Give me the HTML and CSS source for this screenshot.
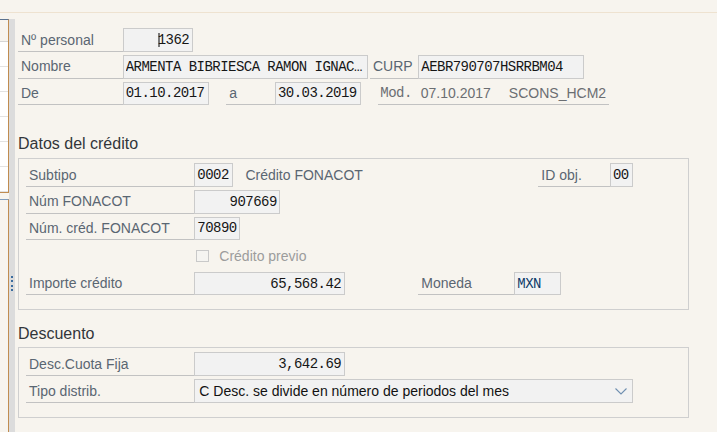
FILE: index.html
```html
<!DOCTYPE html>
<html lang="es">
<head>
  <meta charset="UTF-8" />
  <meta name="viewport" content="width=device-width, initial-scale=1.0" />
  <title>FONACOT - Datos del crédito</title>
  <link rel="stylesheet" href="styles.css">
</head>
<body>
  <div class="topbar"></div>

  <div class="workspace">
    <aside class="sidepanel">
      <div class="side-box side-top">
        <div class="side-head"></div>
        <div class="side-rows">
          <div class="side-row"></div>
          <div class="side-row"></div>
          <div class="side-row"></div>
          <div class="side-row"></div>
          <div class="side-row"></div>
          <div class="side-row"></div>
        </div>
      </div>
      <div class="side-box side-bottom"></div>
    </aside>

    <div class="splitter"><span class="grip"></span></div>

    <main class="content">
      <div class="rows">
        <div class="row">
          <span class="lbl w-head">Nº personal</span>
          <div class="field num w-pers"><span class="caret"></span>1362</div>
        </div>
        <div class="row">
          <span class="lbl w-head">Nombre</span>
          <div class="field w-name"><span class="clip">ARMENTA BIBRIESCA RAMON IGNACIO</span></div>
          <span class="lbl w-curp">CURP</span>
          <div class="field w-curpval">AEBR790707HSRRBM04</div>
        </div>
        <div class="row">
          <span class="lbl w-head">De</span>
          <div class="field w-date">01.10.2017</div>
          <span class="lbl w-a">a</span>
          <div class="field w-date">30.03.2019</div>
          <div class="lbl mod-line">
            <span class="mono">Mod.</span>
            <span class="mod-date">07.10.2017</span>
            <span>SCONS_HCM2</span>
          </div>
        </div>
      </div>

      <h3 class="section-title first">Datos del crédito</h3>
      <div class="group group-credit">
        <div class="rows">
          <div class="row">
            <span class="lbl w-grp">Subtipo</span>
            <div class="field w-sub">0002</div>
            <span class="plain">Crédito FONACOT</span>
            <span class="lbl w-idobj">ID obj.</span>
            <div class="field w-id">00</div>
          </div>
          <div class="row">
            <span class="lbl w-grp">Núm FONACOT</span>
            <div class="field num w-fon">907669</div>
          </div>
          <div class="row">
            <span class="lbl w-grp">Núm. créd. FONACOT</span>
            <div class="field w-cred">70890</div>
          </div>
          <div class="row check-row">
            <span class="checkbox"></span>
            <span class="disabled">Crédito previo</span>
          </div>
          <div class="row">
            <span class="lbl w-grp">Importe crédito</span>
            <div class="field num w-amount">65,568.42</div>
            <span class="lbl w-moneda">Moneda</span>
            <div class="field w-cur currency">MXN</div>
          </div>
        </div>
      </div>

      <h3 class="section-title second">Descuento</h3>
      <div class="group group-desc">
        <div class="rows rows-wide">
          <div class="row">
            <span class="lbl w-grp">Desc.Cuota Fija</span>
            <div class="field num w-amount">3,642.69</div>
          </div>
          <div class="row">
            <span class="lbl w-grp">Tipo distrib.</span>
            <div class="field select w-select">
              <span>C Desc. se divide en número de periodos del mes</span>
              <svg class="chevron" width="12" height="7" viewBox="0 0 12 7">
                <polyline points="0.5,0.5 6,6 11.5,0.5" fill="none" stroke="#6f8fb0" stroke-width="1.1" />
              </svg>
            </div>
          </div>
        </div>
      </div>
    </main>
  </div>
</body>
</html>
```

FILE: styles.css
```css
* {
  box-sizing: border-box;
}

body {
  margin: 0;
  height: 432px;
  overflow: hidden;
  background-color: #f7f4ee;
  font-family: 'Liberation Sans', Arial, sans-serif;
  font-size: 14px;
  color: #32363a;
}

.topbar {
  height: 13px;
  border-bottom: 1px solid #eee2d0;
}

.workspace {
  display: flex;
  margin-top: 6px;
  height: 413px;
}

/* painel lateral (lista recolhida) */
.sidepanel {
  width: 9px;
  display: flex;
  flex-direction: column;
}

.side-box {
  border-right: 1px solid #c08c50;
}

.side-top {
  height: 174px;
  border-top: 1px solid #5a7290;
  border-bottom: 1px solid #c08c50;
  display: flex;
  flex-direction: column;
}

.side-head {
  height: 34px;
}

.side-rows {
  flex: 1;
  background-color: #fff;
  border-top: 1px solid #d6d6d6;
}

.side-row {
  height: 25px;
  border-bottom: 1px solid #e2e2e2;
}

.side-bottom {
  flex: 1;
  margin-top: 6px;
  border-top: 1px solid #7f9cbc;
}

.splitter {
  width: 6px;
  background-color: #dcdcdc;
  padding: 257px 0 0 2px;
}

.grip {
  display: block;
  width: 2px;
  height: 16px;
  background: repeating-linear-gradient(#3b6c9e 0 2px, transparent 2px 4.5px);
}

/* área principal */
.content {
  flex: 1;
  padding: 9.33px 0 0 3px;
}

.rows {
  display: flex;
  flex-direction: column;
  gap: 3px;
}

.rows-wide {
  gap: 3.33px;
}

.row {
  display: flex;
  height: 23.67px;
  align-items: stretch;
}

.lbl {
  display: flex;
  align-items: center;
  padding-left: 3px;
  border-bottom: 1px solid #c2c2c2;
  color: #5a6672;
  white-space: nowrap;
}

.field {
  display: flex;
  align-items: center;
  padding: 0 2px;
  background-color: #f2f2f2;
  border: 1px solid #cbcbcb;
  font-family: 'Liberation Mono', 'Courier New', monospace;
  font-size: 14px;
  letter-spacing: -0.53px;
  color: #161616;
  white-space: nowrap;
  overflow: hidden;
}

.field.num {
  justify-content: flex-end;
  padding-right: 2.5px;
}

.clip {
  overflow: hidden;
  text-overflow: ellipsis;
}

.caret {
  display: inline-block;
  width: 2px;
  height: 14px;
  margin-right: -2px;
  background-color: #7a7a7a;
}

.currency {
  color: #0d3a68;
}

.w-head { width: 104.7px; }
.w-pers { width: 70px; }
.w-name { width: 245.6px; }
.w-curp { width: 48.3px; margin-left: 1.7px; }
.w-curpval { width: 166px; }
.w-date { width: 86.3px; }
.w-a { width: 48.7px; margin-left: 17.3px; }

.mod-line {
  width: 230.7px;
  margin-left: 17px;
  padding-left: 2px;
  color: #6b6e72;
}

.mono {
  font-family: 'Liberation Mono', 'Courier New', monospace;
  font-size: 14px;
  letter-spacing: -0.53px;
}

.mod-date {
  margin: 0 18px 0 9px;
}

.section-title {
  margin: 0;
  font-size: 16px;
  font-weight: normal;
  line-height: 20px;
  color: #32363a;
}

.section-title.first {
  margin: 29.2px 0 3.2px;
}

.section-title.second {
  margin: 13.7px 0 2.7px;
}

.group {
  width: 670.7px;
  border: 1px solid #cfcfcf;
  padding: 4.67px 55px 13.9px 7px;
}

.group-desc {
  padding-bottom: 14.3px;
}

.w-grp { width: 168.3px; }
.w-sub { width: 38.4px; }
.w-idobj { width: 71.7px; margin-left: auto; }
.w-id { width: 22.7px; }
.w-fon { width: 86px; }
.w-cred { width: 46px; }
.w-amount { width: 150.4px; }
.w-moneda { width: 96px; margin-left: 73.6px; }
.w-cur { width: 46.4px; }
.w-select { width: 438.4px; }

.plain {
  display: flex;
  align-items: center;
  margin-left: 12.7px;
  color: #5a6672;
}

.check-row {
  height: 25.4px;
  align-items: center;
  padding-left: 170px;
}

.checkbox {
  width: 12.7px;
  height: 12.7px;
  border: 1px solid #c9c9c9;
  background-color: #f5f4f1;
}

.disabled {
  margin-left: 10.6px;
  color: #9c9c9c;
}

.select {
  justify-content: space-between;
  padding: 0 5px 0 4px;
  font-family: 'Liberation Sans', Arial, sans-serif;
  font-size: 14px;
  letter-spacing: normal;
  color: #111;
}

.chevron {
  flex: none;
}
```
